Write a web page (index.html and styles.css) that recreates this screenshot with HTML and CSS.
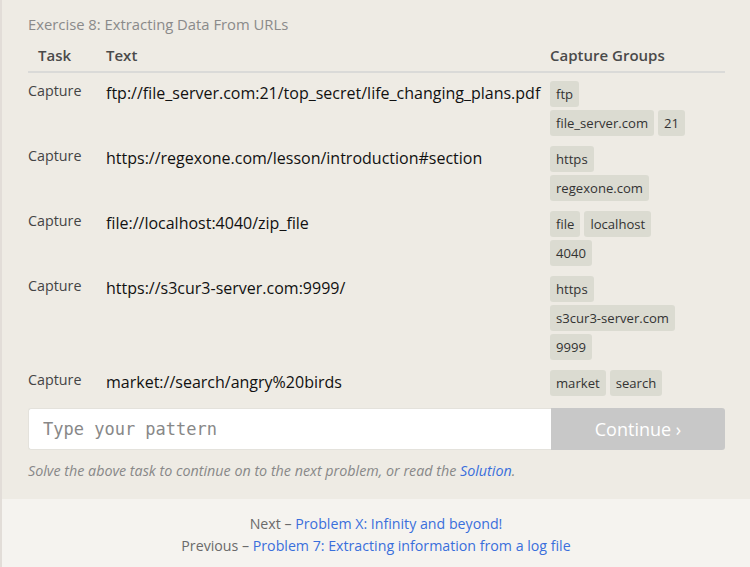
FILE: index.html
```html
<!DOCTYPE html>
<html>
<head>
<meta charset="utf-8">
<link rel="stylesheet" href="styles.css">
</head>
<body>
<div class="page">
  <section class="exercise">
    <h2 class="title">Exercise 8: Extracting Data From URLs</h2>
    <div class="table">
      <div class="head task-col">Task</div>
      <div class="head">Text</div>
      <div class="head">Capture Groups</div>

      <div class="task">Capture</div>
      <div class="text">ftp://file_server.com:21/top_secret/life_changing_plans.pdf</div>
      <div class="groups">
        <div class="line"><span class="tag">ftp</span></div>
        <div class="line"><span class="tag">file_server.com</span><span class="tag">21</span></div>
      </div>

      <div class="task">Capture</div>
      <div class="text">https://regexone.com/lesson/introduction#section</div>
      <div class="groups">
        <div class="line"><span class="tag">https</span></div>
        <div class="line"><span class="tag">regexone.com</span></div>
      </div>

      <div class="task">Capture</div>
      <div class="text">file://localhost:4040/zip_file</div>
      <div class="groups">
        <div class="line"><span class="tag">file</span><span class="tag">localhost</span></div>
        <div class="line"><span class="tag">4040</span></div>
      </div>

      <div class="task">Capture</div>
      <div class="text">https://s3cur3-server.com:9999/</div>
      <div class="groups">
        <div class="line"><span class="tag">https</span></div>
        <div class="line"><span class="tag">s3cur3-server.com</span></div>
        <div class="line"><span class="tag">9999</span></div>
      </div>

      <div class="task">Capture</div>
      <div class="text">market://search/angry%20birds</div>
      <div class="groups">
        <div class="line"><span class="tag">market</span><span class="tag">search</span></div>
      </div>
    </div>
    <div class="entry">
      <input class="pattern" type="text" placeholder="Type your pattern">
      <button class="continue">Continue ›</button>
    </div>
    <p class="hint">Solve the above task to continue on to the next problem, or read the <a href="#">Solution</a>.</p>
  </section>
  <footer class="nav">
    <div>Next – <a href="#">Problem X: Infinity and beyond!</a></div>
    <div>Previous – <a href="#">Problem 7: Extracting information from a log file</a></div>
  </footer>
</div>
</body>
</html>
```
FILE: styles.css
```css
html, body {
  margin: 0;
  padding: 0;
  height: 100%;
}
body {
  font-family: "Open Sans", "Noto Sans", sans-serif;
  background: #f5f3ef;
  overflow: hidden;
}
.page {
  border-left: 2px solid #e2ddd8;
  min-height: 100%;
  box-sizing: border-box;
}
.exercise {
  background: #eeebe4;
  padding: 14px 25px 18px 26px;
}
.title {
  margin: 0 0 6px;
  font-size: 14.8px;
  font-weight: 400;
  color: #8a8a8a;
  line-height: 20px;
}
.table {
  display: grid;
  grid-template-columns: 78px 444px 175px;
  align-items: start;
}
.head {
  font-size: 15px;
  font-weight: 600;
  color: #4a4a4a;
  line-height: 20px;
  padding: 5px 0 6px;
  border-bottom: 2px solid #dadad8;
  margin-bottom: 9px;
}
.head.task-col {
  padding-left: 10px;
}
.task {
  font-size: 14.3px;
  color: #444;
  line-height: 18px;
}
.text {
  font-size: 16px;
  color: #111;
  line-height: 22px;
  white-space: nowrap;
}
.groups {
  display: flex;
  flex-direction: column;
  gap: 3px;
  margin-bottom: 11px;
  margin-top: -1px;
}
.line {
  display: flex;
  gap: 4px;
}
.tag {
  display: inline-block;
  background: #dbdbd1;
  color: #333;
  font-size: 13.1px;
  line-height: 26px;
  height: 26px;
  padding: 0 6px;
  border-radius: 3px;
  white-space: nowrap;
}
.entry {
  display: flex;
  margin-top: 1px;
  height: 42px;
}
.pattern {
  flex: 1;
  border: 1px solid #e4e2dc;
  border-right: none;
  border-radius: 3px 0 0 3px;
  background: #fff;
  font-family: "DejaVu Sans Mono", "Liberation Mono", monospace;
  font-size: 17px;
  padding: 0 14px;
  color: #333;
  outline: none;
}
.pattern::placeholder {
  color: #888;
}
.continue {
  width: 174px;
  border: none;
  border-radius: 0 3px 3px 0;
  background: #c8c8c8;
  color: #fff;
  font-family: "Open Sans", "Noto Sans", sans-serif;
  font-size: 18px;
  padding: 0;
}
.hint {
  margin: 11px 0 0;
  font-size: 14.3px;
  font-style: italic;
  color: #888;
  line-height: 20px;
}
.hint a {
  color: #3a6fdc;
  text-decoration: none;
}
.nav {
  text-align: center;
  font-size: 14.2px;
  color: #6a6a6a;
  line-height: 22px;
  padding: 14px 0 10px;
}
.nav a {
  color: #3a6fdc;
  text-decoration: none;
}
```
